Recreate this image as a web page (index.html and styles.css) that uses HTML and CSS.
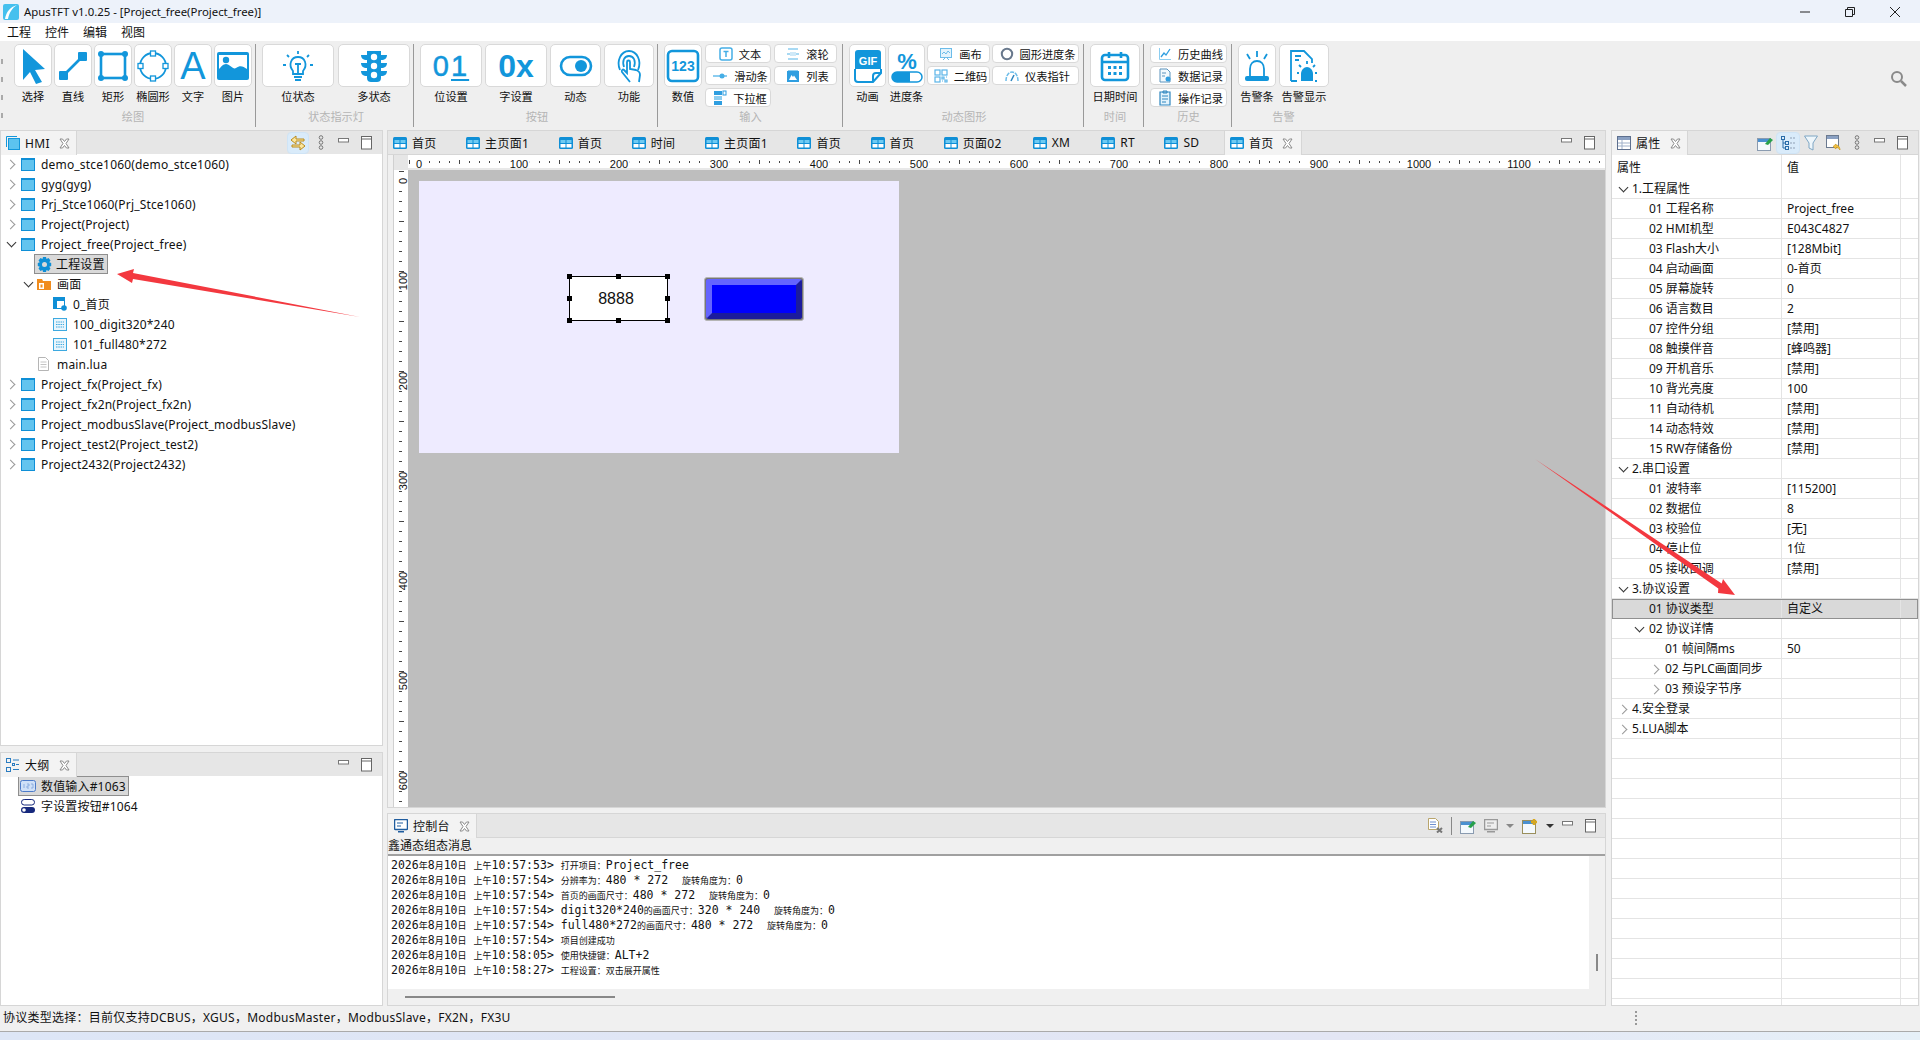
FILE: index.html
```html
<!DOCTYPE html>
<html lang="zh-CN">
<head>
  <meta charset="UTF-8">
  <title>ApusTFT v1.0.25 - [Project_free(Project_free)]</title>
  <link rel="stylesheet" href="styles.css">
</head>
<body>

  <svg class="sprite" width="0" height="0">
    <symbol id="page" viewBox="0 0 14 12"><rect width="14" height="12" rx="1.5" fill="#0f8fd6"/><rect x="1.5" y="3" width="5" height="3" fill="#6fcaf2"/><rect x="7.5" y="3" width="5" height="3" fill="#6fcaf2"/><rect x="1.5" y="7" width="5" height="3.5" fill="#fff"/><rect x="7.5" y="7" width="5" height="3.5" fill="#fff"/></symbol>
    <symbol id="folder" viewBox="0 0 14 13"><rect width="14" height="13" fill="#0f8fd6"/><rect x="1" y="2" width="12" height="10" fill="#62c4ef"/></symbol>
    <symbol id="screen" viewBox="0 0 14 13"><rect x=".5" y=".5" width="13" height="12" fill="#e8f5fc" stroke="#3da9e0"/><path d="M3 4h8M3 6.500h8M3 9h8" stroke="#3da9e0" stroke-dasharray="1.500 .8"/></symbol>
    <symbol id="close" viewBox="0 0 11 11"><path d="M1 1h2.500l2 2.500 2-2.500H10L7 5.500l3 4.500H7.500l-2-2.500-2 2.500H1l3-4.500z" fill="#fff" stroke="#8b8b8b"/></symbol>
    <symbol id="min" viewBox="0 0 11 5"><rect x=".5" y=".5" width="10" height="3.500" fill="#fff" stroke="#777"/></symbol>
    <symbol id="max" viewBox="0 0 11 14"><rect x=".5" y=".5" width="10" height="12.500" fill="#fff" stroke="#666"/><path d="M1 3h9" stroke="#666"/></symbol>
    <symbol id="dots" viewBox="0 0 6 15"><g fill="none" stroke="#777"><circle cx="3" cy="2.500" r="1.800"/><circle cx="3" cy="7.500" r="1.800"/><circle cx="3" cy="12.500" r="1.800"/></g></symbol>
    <symbol id="pin" viewBox="0 0 16 16"><rect x=".5" y="3.500" width="13" height="12" fill="#f4f9fd" stroke="#8a9bb0"/><rect x="1" y="4" width="12" height="3" fill="#4a90d0"/><path d="M8 9l5-6 3 2-5 5z" fill="#27a04a"/></symbol>
  </svg>

  <div class="titlebar">
    <svg class="logo" width="16" height="16" viewBox="0 0 16 16"><rect width="16" height="16" rx="2" fill="#45c0ee"/><path d="M2 15C3 8 7 3 14 1 9 4 6 9 5 15z" fill="#fff"/></svg>
    <span class="title">ApusTFT v1.0.25 - [Project_free(Project_free)]</span>
    <div class="winbtns">
      <svg width="12" height="12" viewBox="0 0 12 12"><path d="M1 6h10" stroke="#222"/></svg>
      <svg width="12" height="12" viewBox="0 0 12 12"><path d="M1.500 3.500h7v7h-7zM3.500 3V1.500h7v7H9" fill="none" stroke="#222"/></svg>
      <svg width="12" height="12" viewBox="0 0 12 12"><path d="M1 1l10 10M11 1L1 11" stroke="#222"/></svg>
    </div>
  </div>

  <div class="menubar">
    <span>工程</span><span>控件</span><span>编辑</span><span>视图</span>
  </div>

  <div class="toolbar">
    <div class="grip"><i></i><i></i><i></i><i></i></div>

    <section class="group first">
      <div class="group-body gap2">
        <div class="tool w38"><div class="btn"><svg class="ico" width="32" height="36" viewBox="0 0 32 36"><path d="M6 1l22 20-10 1 7 12-6 2-6-12-7 8z"/></svg></div><label>选择</label></div>
        <div class="tool w38"><div class="btn"><svg class="ico" width="32" height="32" viewBox="0 0 32 32"><rect x="2" y="21" width="9" height="9" rx="1"/><rect x="21" y="2" width="9" height="9" rx="1"/><path d="M7 25L26 6" class="ln"/></svg></div><label>直线</label></div>
        <div class="tool w38"><div class="btn"><svg class="ico" width="32" height="32" viewBox="0 0 32 32"><rect x="4" y="4" width="24" height="24" class="ln"/><circle cx="4" cy="4" r="3"/><circle cx="28" cy="4" r="3"/><circle cx="4" cy="28" r="3"/><circle cx="28" cy="28" r="3"/></svg></div><label>矩形</label></div>
        <div class="tool w38"><div class="btn"><svg class="ico" width="32" height="32" viewBox="0 0 32 32"><circle cx="16" cy="16" r="13" class="ln thin"/><g fill="#fff" stroke="#1296db" stroke-width="1.300"><rect x="13.500" y="1" width="5" height="5"/><rect x="13.500" y="26" width="5" height="5"/><rect x="1" y="13.500" width="5" height="5"/><rect x="26" y="13.500" width="5" height="5"/></g></svg></div><label>椭圆形</label></div>
        <div class="tool w38"><div class="btn"><span class="glyph-a">A</span></div><label>文字</label></div>
        <div class="tool w38"><div class="btn"><svg class="ico" width="34" height="32" viewBox="0 0 34 32"><rect x="1" y="2" width="32" height="28" rx="2"/><path d="M3 5h28v14c-4-3-7-4-11-1-3 2-6-4-10-4-3 0-5 3-7 5z" fill="#fff"/><circle cx="10" cy="10" r="3.200"/></svg></div><label>图片</label></div>
      </div>
      <div class="caption">绘图</div>
    </section>

    <section class="group">
      <div class="group-body gap4">
        <div class="tool w72"><div class="btn"><svg class="ico" width="32" height="32" viewBox="0 0 32 32"><g class="ln thin"><path d="M11 21c-5-6-2-14 5-14s10 8 5 14v3H11z"/><path d="M13 14h6M16 14v10M12 27h8M13 30h6M16 1v3M5 5l2 2M27 5l-2 2M1 15h3M31 15h-3"/></g></svg></div><label>位状态</label></div>
        <div class="tool w72"><div class="btn"><svg class="ico" width="32" height="34" viewBox="0 0 32 34"><path d="M9 2h14v4h6c0 3-2 5-6 5v3h6c0 3-2 5-6 5v3h6c0 3-2 5-6 5v2c0 3-2 4-4 4h-6c-2 0-4-1-4-4v-2c-4 0-6-2-6-5h6v-3c-4 0-6-2-6-5h6v-3c-4 0-6-2-6-5h6z"/><g fill="#fff"><circle cx="16" cy="8" r="3.200"/><circle cx="16" cy="17" r="3.200"/><circle cx="16" cy="26" r="3.200"/></g></svg></div><label>多状态</label></div>
      </div>
      <div class="caption">状态指示灯</div>
    </section>

    <section class="group">
      <div class="group-body gap3">
        <div class="tool w62"><div class="btn"><span class="glyph-01">0<u>1</u></span></div><label>位设置</label></div>
        <div class="tool w62"><div class="btn"><span class="glyph-0x">0x</span></div><label>字设置</label></div>
        <div class="tool w51"><div class="btn"><svg class="ico" width="34" height="24" viewBox="0 0 34 24"><rect x="2" y="3" width="30" height="18" rx="9" class="ln"/><circle cx="22" cy="12" r="6"/></svg></div><label>动态</label></div>
        <div class="tool w50"><div class="btn"><svg class="ico" width="32" height="34" viewBox="0 0 32 34"><g class="ln thin"><path d="M7 21C3 12 8 2 16 2s13 10 9 19"/><path d="M11 18c-2-6 0-11 5-11s7 5 5 11"/><path d="M17 33l-8-10c-1-2 1-3 2-2l3 3V13c0-2 3-2 3 0v7l6 1c3 1 4 3 4 5l-1 7"/></g></svg></div><label>功能</label></div>
      </div>
      <div class="caption">按钮</div>
    </section>

    <section class="group pad5">
      <div class="group-body gap3">
        <div class="tool w38"><div class="btn"><svg class="ico" width="34" height="34" viewBox="0 0 34 34"><rect x="2" y="2" width="30" height="30" rx="4" class="ln"/><text x="17" y="22" class="icotext" font-size="14" font-weight="700">123</text></svg></div><label>数值</label></div>
        <div class="smallgrid cols-input">
          <div class="sbtn"><svg width="14" height="14" viewBox="0 0 14 14"><rect x="1" y="1" width="12" height="12" rx="2" fill="none" stroke="#45aee6" stroke-width="1.500"/><path d="M4.500 4.500h5M7 4.500v5.500" stroke="#45aee6" stroke-width="1.500"/></svg>文本</div>
          <div class="sbtn"><svg width="14" height="14" viewBox="0 0 14 14"><path d="M2 2h10M1 7h12M2 12h10" stroke="#8ccdf0" stroke-width="1.500"/><path d="M4 5h6v4H4z" fill="#cfe9f8"/></svg>滚轮</div>
          <div class="sbtn"><svg width="16" height="14" viewBox="0 0 16 14"><path d="M1 7h14" stroke="#8ccdf0" stroke-width="2"/><circle cx="10" cy="7" r="2.500" fill="#45aee6"/></svg>滑动条</div>
          <div class="sbtn"><svg width="14" height="14" viewBox="0 0 14 14"><rect x="1" y="2" width="12" height="11" fill="#2f9ee0"/><path d="M2 1h10v1H2z" fill="#8ccdf0"/><path d="M3 11l2.500-5L7 8l1-1.500L11 11z" fill="#fff"/></svg>列表</div>
          <div class="sbtn"><svg width="14" height="16" viewBox="0 0 14 16"><rect x="1" y="1" width="8" height="4" fill="#2f9ee0"/><rect x="10" y="1" width="3" height="4" fill="none" stroke="#2f9ee0"/><rect x="1" y="6" width="8" height="4" fill="#8ccdf0"/><rect x="1" y="11" width="8" height="4" fill="#2f9ee0"/></svg>下拉框</div>
        </div>
      </div>
      <div class="caption">输入</div>
    </section>

    <section class="group pad4">
      <div class="group-body gap2">
        <div class="tool w37"><div class="btn"><svg width="32" height="36" viewBox="0 0 32 36"><path d="M3 5c0-2 1-3 3-3h20c2 0 3 1 3 3v16H3z" fill="#1296db"/><path d="M3 21v10c0 2 1 3 3 3h15l8-9v-4" fill="none" stroke="#1296db" stroke-width="2"/><path d="M21 34v-6c0-2 1-3 3-3h5" fill="none" stroke="#1296db" stroke-width="2"/><text x="16" y="17" class="icotext white" font-size="11" font-weight="700">GIF</text></svg></div><label>动画</label></div>
        <div class="tool w37"><div class="btn"><svg class="ico" width="34" height="34" viewBox="0 0 34 34"><text x="17" y="20" class="icotext" font-size="22" font-weight="700">%</text><rect x="2" y="23" width="30" height="10" rx="5" fill="#fff" stroke="#1296db" stroke-width="1.500"/><path d="M7 23h13v10H7a5 5 0 0 1 0-10z"/></svg></div><label>进度条</label></div>
        <div class="smallgrid cols-dyn">
          <div class="sbtn"><svg width="14" height="14" viewBox="0 0 14 14"><rect x="1.500" y="1.500" width="11" height="9" fill="#e3f3fc" stroke="#6cbce9"/><path d="M3 7l2-2 2 2 2-3 2 2M4 13l2-2M10 13l-2-2" fill="none" stroke="#6cbce9"/></svg>画布</div>
          <div class="sbtn"><svg width="14" height="14" viewBox="0 0 14 14"><circle cx="7" cy="7" r="5.200" fill="none" stroke="#68788c" stroke-width="2"/></svg>圆形进度条</div>
          <div class="sbtn"><svg width="14" height="14" viewBox="0 0 14 14"><g fill="none" stroke="#5ab4e8" stroke-width="1.200"><rect x="1" y="1" width="5" height="5"/><rect x="8" y="1" width="5" height="5"/><rect x="1" y="8" width="5" height="5"/><path d="M8 8h2v2H8zM11 11h2v2h-2zM8 12h1M12 8h1"/></g></svg>二维码</div>
          <div class="sbtn"><svg width="14" height="14" viewBox="0 0 14 14"><path d="M1 12c0-6 3-9 6-9s6 3 6 9" fill="none" stroke="#6cbce9" stroke-width="1.500" stroke-dasharray="4 1"/><path d="M6 12l3-6" stroke="#2f86bf" stroke-width="1.500"/></svg>仪表指针</div>
        </div>
      </div>
      <div class="caption">动态图形</div>
    </section>

    <section class="group">
      <div class="group-body">
        <div class="tool w50"><div class="btn"><svg class="ico" width="32" height="32" viewBox="0 0 32 32"><rect x="3" y="5" width="26" height="25" rx="3" class="ln"/><path d="M3 12h26M10 2v6M22 2v6" class="ln"/><g><rect x="9" y="16" width="3" height="3"/><rect x="14.500" y="16" width="3" height="3"/><rect x="20" y="16" width="3" height="3"/><rect x="9" y="22" width="3" height="3"/><rect x="14.500" y="22" width="3" height="3"/><rect x="20" y="22" width="3" height="3"/></g></svg></div><label>日期时间</label></div>
      </div>
      <div class="caption">时间</div>
    </section>

    <section class="group pad4">
      <div class="smallgrid cols-hist">
        <div class="sbtn"><svg width="14" height="14" viewBox="0 0 14 14"><path d="M1.500 1v11.500H13" fill="none" stroke="#8ccdf0"/><path d="M3 10l3-4 2 2 4-6" fill="none" stroke="#2f9ee0" stroke-width="1.300"/></svg>历史曲线</div>
        <div class="sbtn"><svg width="14" height="15" viewBox="0 0 14 15"><path d="M2 1h7l3 3v10H2z" fill="#f2f9fd" stroke="#5a93bd"/><path d="M4 5h4M4 8h3" stroke="#5a93bd"/><circle cx="10" cy="11" r="2.500" fill="#2f9ee0"/></svg>数据记录</div>
        <div class="sbtn"><svg width="14" height="16" viewBox="0 0 14 16"><path d="M2 2h10v13H2z" fill="#e3f3fc" stroke="#2f86bf" stroke-width="1.200"/><path d="M5 1h4v2H5zM4 6h6M4 9h6M4 12h4" fill="none" stroke="#2f86bf"/></svg>操作记录</div>
      </div>
      <div class="caption">历史</div>
    </section>

    <section class="group last">
      <div class="group-body gap3">
        <div class="tool w38"><div class="btn"><svg class="ico" width="32" height="34" viewBox="0 0 32 34"><g class="ln thin"><path d="M9 27V20c0-5 3-8 7-8s7 3 7 8v7"/><path d="M16 2v6M6 5l3 5M26 5l-3 5"/></g><rect x="4" y="27" width="24" height="5" rx="2"/></svg></div><label>告警条</label></div>
        <div class="tool w50"><div class="btn"><svg class="ico" width="34" height="34" viewBox="0 0 34 34"><path d="M4 32V2h13l8 8v4M4 32h6M28 32h2" class="ln thin" fill="none"/><path d="M8 7h6M8 11h4" class="ln thin"/><path d="M14 32v-7c0-4 3-7 6-7s6 3 6 7v7z"/><path d="M20 12v3M12 16l2 2M28 16l-2 2M10 24h2M28 24h2" class="ln thin"/></svg></div><label>告警显示</label></div>
        <svg class="search" width="18" height="18" viewBox="0 0 18 18"><circle cx="7" cy="7" r="5" fill="none" stroke="#8a8a8a" stroke-width="2"/><path d="M11 11l5 5" stroke="#8a8a8a" stroke-width="2.500"/></svg>
      </div>
      <div class="caption">告警</div>
    </section>
  </div>

  <div class="workbench">

    <div class="col">
      <div class="panel tree-panel">
        <div class="tabbar">
          <div class="tab active">
            <svg width="14" height="14" viewBox="0 0 14 14"><path d="M.5 11V.5H11" fill="none" stroke="#1296db"/><rect x="2.500" y="2.500" width="11" height="11" fill="#5cc3ef" stroke="#1296db"/></svg>
            HMI<svg class="x" width="11" height="11"><use href="#close"/></svg>
          </div>
          <div class="tabtools">
            <svg class="on" width="20" height="20" viewBox="0 0 20 20"><path d="M8 3L3 7l5 4V8h8V6H8zM12 9l5 4-5 4v-3H4v-2h8z" fill="#fbe7a0" stroke="#b98a1c"/></svg>
            <svg width="6" height="15"><use href="#dots"/></svg>
            <svg class="mi" width="11" height="5"><use href="#min"/></svg>
            <svg width="11" height="14"><use href="#max"/></svg>
          </div>
        </div>
        <div class="tree">
          <div class="node d0"><b class="tw"></b><svg width="14" height="13"><use href="#folder"/></svg>demo_stce1060(demo_stce1060)</div>
          <div class="node d0"><b class="tw"></b><svg width="14" height="13"><use href="#folder"/></svg>gyg(gyg)</div>
          <div class="node d0"><b class="tw"></b><svg width="14" height="13"><use href="#folder"/></svg>Prj_Stce1060(Prj_Stce1060)</div>
          <div class="node d0"><b class="tw"></b><svg width="14" height="13"><use href="#folder"/></svg>Project(Project)</div>
          <div class="node d0"><b class="tw open"></b><svg width="14" height="13"><use href="#folder"/></svg>Project_free(Project_free)</div>
          <div class="node d1"><span class="picked"><svg width="15" height="15" viewBox="0 0 15 15"><path d="M6 0h3l.5 2 2-1 2 2.500-1.300 1.700 2 .8v3l-2 .8 1.300 1.700-2 2.500-2-1L9 15H6l-.5-2-2 1-2-2.500 1.300-1.700-2-.8V6l2-.8L1.500 3.500l2-2.500 2 1z" fill="#0f8fd6"/><circle cx="7.500" cy="7.500" r="2.500" fill="#d9d9d9"/></svg>工程设置</span></div>
          <div class="node d1 branch"><b class="tw open"></b><svg width="14" height="12" viewBox="0 0 14 12"><path d="M0 1h5l1 2h8v9H0z" fill="#f08c1e"/><rect x="2" y="5" width="5" height="6" fill="#fff"/><rect x="3.500" y="6.500" width="2" height="3" fill="#f08c1e"/></svg>画面</div>
          <div class="node d2"><svg width="14" height="14" viewBox="0 0 14 14"><rect x=".5" y=".5" width="11" height="11" fill="#fff" stroke="#0f8fd6"/><path d="M1 1h10v3H1zM1 4h3v7H1z" fill="#0f8fd6"/><circle cx="11" cy="11" r="2.800" fill="#0f8fd6"/></svg>0_首页</div>
          <div class="node d2"><svg width="14" height="13"><use href="#screen"/></svg>100_digit320*240</div>
          <div class="node d2"><svg width="14" height="13"><use href="#screen"/></svg>101_full480*272</div>
          <div class="node d1 file"><svg width="11" height="14" viewBox="0 0 11 14"><path d="M.5.500h7l3 3v10H.5z" fill="#fff" stroke="#b5b5b5"/><path d="M2.500 5h6M2.500 7.500h6M2.500 10h6" stroke="#c4c4c4"/></svg>main.lua</div>
          <div class="node d0"><b class="tw"></b><svg width="14" height="13"><use href="#folder"/></svg>Project_fx(Project_fx)</div>
          <div class="node d0"><b class="tw"></b><svg width="14" height="13"><use href="#folder"/></svg>Project_fx2n(Project_fx2n)</div>
          <div class="node d0"><b class="tw"></b><svg width="14" height="13"><use href="#folder"/></svg>Project_modbusSlave(Project_modbusSlave)</div>
          <div class="node d0"><b class="tw"></b><svg width="14" height="13"><use href="#folder"/></svg>Project_test2(Project_test2)</div>
          <div class="node d0"><b class="tw"></b><svg width="14" height="13"><use href="#folder"/></svg>Project2432(Project2432)</div>
        </div>
      </div>

      <div class="panel outline-panel">
        <div class="tabbar">
          <div class="tab active">
            <svg width="14" height="14" viewBox="0 0 14 14"><g fill="none" stroke="#2a7cc0"><rect x=".5" y=".5" width="4" height="4"/><rect x=".5" y="9.500" width="4" height="4"/><rect x="6.500" y="5.500" width="2" height="2"/><path d="M7 2h6M10 6.500h3M7 11.500h6"/></g></svg>
            大纲<svg class="x" width="11" height="11"><use href="#close"/></svg>
          </div>
          <div class="tabtools">
            <svg class="mi" width="11" height="5"><use href="#min"/></svg>
            <svg width="11" height="14"><use href="#max"/></svg>
          </div>
        </div>
        <div class="tree outline">
          <div class="node"><span class="picked"><svg width="16" height="12" viewBox="0 0 16 12"><rect x=".5" y=".5" width="15" height="11" rx="2" fill="#cfe0f7" stroke="#4d7cc9"/><path d="M4 4v4M7 4h2v2H7v2h2M11 4h2v4h-2" fill="none" stroke="#7fa3dc" stroke-width=".8"/></svg>数值输入#1063</span></div>
          <div class="node"><svg width="14" height="14" viewBox="0 0 14 14"><rect x=".5" y=".5" width="13" height="5.500" rx="2.700" fill="#fff" stroke="#16287c"/><rect x="0" y="8" width="14" height="6" rx="3" fill="#16287c"/><circle cx="3" cy="11" r="1.800" fill="#fff"/></svg>字设置按钮#1064</div>
        </div>
      </div>
    </div>

    <div class="col center">
      <div class="panel editor">
        <div class="tabbar">
          <div class="tab"><svg width="14" height="12"><use href="#page"/></svg>首页</div>
          <div class="tab"><svg width="14" height="12"><use href="#page"/></svg>主页面1</div>
          <div class="tab"><svg width="14" height="12"><use href="#page"/></svg>首页</div>
          <div class="tab"><svg width="14" height="12"><use href="#page"/></svg>时间</div>
          <div class="tab"><svg width="14" height="12"><use href="#page"/></svg>主页面1</div>
          <div class="tab"><svg width="14" height="12"><use href="#page"/></svg>首页</div>
          <div class="tab"><svg width="14" height="12"><use href="#page"/></svg>首页</div>
          <div class="tab wide"><svg width="14" height="12"><use href="#page"/></svg>页面02</div>
          <div class="tab wide"><svg width="14" height="12"><use href="#page"/></svg>XM</div>
          <div class="tab"><svg width="14" height="12"><use href="#page"/></svg>RT</div>
          <div class="tab"><svg width="14" height="12"><use href="#page"/></svg>SD</div>
          <div class="tab active doc"><svg width="14" height="12"><use href="#page"/></svg>首页<svg class="x" width="11" height="11"><use href="#close"/></svg></div>
          <div class="tabtools">
            <svg class="mi" width="11" height="5"><use href="#min"/></svg>
            <svg width="11" height="14"><use href="#max"/></svg>
          </div>
        </div>
        <div class="editor-body">
          <div class="ruler-row">
            <div class="corner"></div>
            <div class="ruler-x">
              <span><i>0</i></span><span><i>100</i></span><span><i>200</i></span><span><i>300</i></span><span><i>400</i></span><span><i>500</i></span><span><i>600</i></span><span><i>700</i></span><span><i>800</i></span><span><i>900</i></span><span><i>1000</i></span><span><i>1100</i></span>
            </div>
          </div>
          <div class="stage-row">
            <div class="ruler-y">
              <span><i>0</i></span><span><i>100</i></span><span><i>200</i></span><span><i>300</i></span><span><i>400</i></span><span><i>500</i></span><span><i>600</i></span>
            </div>
            <div class="stage">
              <div class="screen">
                <div class="w-input">8888
                  <b class="hd tl"></b><b class="hd tc"></b><b class="hd tr"></b><b class="hd ml"></b><b class="hd mr"></b><b class="hd bl"></b><b class="hd bc"></b><b class="hd br"></b>
                </div>
                <div class="w-button"><div></div></div>
              </div>
            </div>
          </div>
        </div>
      </div>

      <div class="panel console">
        <div class="tabbar">
          <div class="tab active con">
            <svg width="14" height="14" viewBox="0 0 14 14"><rect x=".5" y=".5" width="13" height="10" rx="1" fill="#fff" stroke="#1f5c9e" stroke-width="1.500"/><path d="M3 4h6M3 7h4" stroke="#1f5c9e"/><path d="M4 12h6v1.500H4z" fill="#1f5c9e"/></svg>
            控制台<svg class="x" width="11" height="11"><use href="#close"/></svg>
          </div>
          <div class="tabtools con-tools">
            <svg width="15" height="15" viewBox="0 0 15 15"><path d="M.5.500h7l3 3v8H.5z" fill="#fff" stroke="#b9a56c"/><path d="M2 4h6M2 6.500h6M2 9h6" stroke="#6f8fce"/><path d="M9 10l5 4.500M14 10l-5 4.500" stroke="#777" stroke-width="2"/></svg>
            <i class="vsep"></i>
            <svg width="16" height="16"><use href="#pin"/></svg>
            <svg width="14" height="14" viewBox="0 0 14 14"><rect x=".5" y=".5" width="13" height="10" fill="#eee" stroke="#999" stroke-width="1.500"/><path d="M3 4h7M3 7h4" stroke="#999"/><path d="M3 12h8v1.500H3z" fill="#999"/></svg>
            <i class="tri gray"></i>
            <svg width="16" height="16" viewBox="0 0 16 16"><rect x=".5" y="2.500" width="13" height="13" fill="#f4f9fd" stroke="#9a8f5c"/><rect x="1" y="3" width="12" height="3" fill="#4a90d0"/><path d="M12 1v6M9 4h6" stroke="#d8a81f" stroke-width="2.500"/></svg>
            <i class="tri"></i>
            <svg class="mi" width="11" height="5"><use href="#min"/></svg>
            <svg width="11" height="14"><use href="#max"/></svg>
          </div>
        </div>
        <div class="con-head">鑫通态组态消息</div>
        <div class="con-main">
          <div class="con-text">
            <div>2026<i>年</i>8<i>月</i>10<i>日</i> <i>上午</i>10:57:53&gt; <i>打开项目：</i>Project_free</div>
            <div>2026<i>年</i>8<i>月</i>10<i>日</i> <i>上午</i>10:57:54&gt; <i>分辨率为：</i>480 * 272  <i>旋转角度为：</i>0</div>
            <div>2026<i>年</i>8<i>月</i>10<i>日</i> <i>上午</i>10:57:54&gt; <i>首页的画面尺寸：</i>480 * 272  <i>旋转角度为：</i>0</div>
            <div>2026<i>年</i>8<i>月</i>10<i>日</i> <i>上午</i>10:57:54&gt; digit320*240<i>的画面尺寸：</i>320 * 240  <i>旋转角度为：</i>0</div>
            <div>2026<i>年</i>8<i>月</i>10<i>日</i> <i>上午</i>10:57:54&gt; full480*272<i>的画面尺寸：</i>480 * 272  <i>旋转角度为：</i>0</div>
            <div>2026<i>年</i>8<i>月</i>10<i>日</i> <i>上午</i>10:57:54&gt; <i>项目创建成功</i></div>
            <div>2026<i>年</i>8<i>月</i>10<i>日</i> <i>上午</i>10:58:05&gt; <i>使用快捷键：</i>ALT+2</div>
            <div>2026<i>年</i>8<i>月</i>10<i>日</i> <i>上午</i>10:58:27&gt; <i>工程设置：双击展开属性</i></div>
          </div>
          <div class="vscroll"><b></b></div>
        </div>
        <div class="hscroll"><b></b></div>
      </div>
    </div>

    <div class="panel props">
      <div class="tabbar">
        <div class="tab active">
          <svg width="14" height="14" viewBox="0 0 14 14"><rect x=".5" y=".5" width="13" height="13" fill="#fff" stroke="#5d6f8e"/><path d="M1 1h12v3H1z" fill="#8aa0c2"/><path d="M1 7h12M1 10h12M5 4v9" stroke="#9fb0c9"/></svg>
          属性<svg class="x" width="11" height="11"><use href="#close"/></svg>
        </div>
        <div class="tabtools prop-tools">
          <svg width="16" height="16"><use href="#pin"/></svg>
          <svg class="on" width="22" height="20" viewBox="0 0 22 20"><g fill="none" stroke="#2a6ca8"><rect x="4.500" y="3.500" width="3" height="3"/><rect x="8.500" y="8.500" width="3" height="3"/><rect x="8.500" y="13.500" width="3" height="3"/><path d="M6 7v8h2M6 10h2"/></g><path d="M13 5h6M13 10h6M13 15h6" stroke="#8fa0b5" stroke-dasharray="2 1"/></svg>
          <svg width="14" height="16" viewBox="0 0 14 16"><path d="M.5 1h13L9 8v7l-4-2V8z" fill="#eef6fb" stroke="#7fa6c4"/></svg>
          <svg width="16" height="16" viewBox="0 0 16 16"><rect x=".5" y=".5" width="12" height="12" fill="#fff" stroke="#6b7a90"/><path d="M1 1h11v3H1z" fill="#8aa0c2"/><path d="M10 9l-3 2.500 3 2.500v-1.500c2 0 3 1 4 2.500 0-3-1.500-5-4-5z" fill="#f1c043" stroke="#c49216" stroke-width=".6"/></svg>
          <svg width="6" height="15"><use href="#dots"/></svg>
          <svg class="mi" width="11" height="5"><use href="#min"/></svg>
          <svg width="11" height="14"><use href="#max"/></svg>
        </div>
      </div>
      <div class="ptable">
        <div class="prow phead"><div>属性</div><div>值</div><div></div></div>
        <div class="prow"><div class="l0"><b class="tw open"></b>1.工程属性</div><div></div><div></div></div>
        <div class="prow"><div class="l1">01 工程名称</div><div>Project_free</div><div></div></div>
        <div class="prow"><div class="l1">02 HMI机型</div><div>E043C4827</div><div></div></div>
        <div class="prow"><div class="l1">03 Flash大小</div><div>[128Mbit]</div><div></div></div>
        <div class="prow"><div class="l1">04 启动画面</div><div>0-首页</div><div></div></div>
        <div class="prow"><div class="l1">05 屏幕旋转</div><div>0</div><div></div></div>
        <div class="prow"><div class="l1">06 语言数目</div><div>2</div><div></div></div>
        <div class="prow"><div class="l1">07 控件分组</div><div>[禁用]</div><div></div></div>
        <div class="prow"><div class="l1">08 触摸伴音</div><div>[蜂鸣器]</div><div></div></div>
        <div class="prow"><div class="l1">09 开机音乐</div><div>[禁用]</div><div></div></div>
        <div class="prow"><div class="l1">10 背光亮度</div><div>100</div><div></div></div>
        <div class="prow"><div class="l1">11 自动待机</div><div>[禁用]</div><div></div></div>
        <div class="prow"><div class="l1">14 动态特效</div><div>[禁用]</div><div></div></div>
        <div class="prow"><div class="l1">15 RW存储备份</div><div>[禁用]</div><div></div></div>
        <div class="prow"><div class="l0"><b class="tw open"></b>2.串口设置</div><div></div><div></div></div>
        <div class="prow"><div class="l1">01 波特率</div><div>[115200]</div><div></div></div>
        <div class="prow"><div class="l1">02 数据位</div><div>8</div><div></div></div>
        <div class="prow"><div class="l1">03 校验位</div><div>[无]</div><div></div></div>
        <div class="prow"><div class="l1">04 停止位</div><div>1位</div><div></div></div>
        <div class="prow"><div class="l1">05 接收回调</div><div>[禁用]</div><div></div></div>
        <div class="prow"><div class="l0"><b class="tw open"></b>3.协议设置</div><div></div><div></div></div>
        <div class="prow selected"><div class="l1">01 协议类型</div><div>自定义</div><div></div></div>
        <div class="prow"><div class="l1b"><b class="tw open"></b>02 协议详情</div><div></div><div></div></div>
        <div class="prow"><div class="l2">01 帧间隔ms</div><div>50</div><div></div></div>
        <div class="prow"><div class="l2b"><b class="tw"></b>02 与PLC画面同步</div><div></div><div></div></div>
        <div class="prow"><div class="l2b"><b class="tw"></b>03 预设字节序</div><div></div><div></div></div>
        <div class="prow"><div class="l0"><b class="tw"></b>4.安全登录</div><div></div><div></div></div>
        <div class="prow"><div class="l0"><b class="tw"></b>5.LUA脚本</div><div></div><div></div></div>
        <div class="prow filler"><div></div><div></div><div></div></div>
      </div>
    </div>
  </div>

  <div class="statusbar">
    <span>协议类型选择：目前仅支持DCBUS，XGUS，ModbusMaster，ModbusSlave，FX2N，FX3U</span>
    <i class="status-grip"></i>
  </div>
  <div class="desktop"></div>

  <svg class="arrows" width="1920" height="1040" viewBox="0 0 1920 1040">
    <polygon points="360,317 133,273 134,269 117,274 132,283 133,279"/>
    <polygon points="1535,459 1721.700,583.500 1723,579 1735,595 1718,593 1718.300,588.500"/>
  </svg>

</body>
</html>
```

FILE: styles.css
```css
* {
  box-sizing: border-box;
}
html, body {
  margin: 0;
  height: 1040px;
  overflow: hidden;
}
body {
  display: flex;
  flex-direction: column;
  position: relative;
  font-family: "Noto Sans", "Noto Sans CJK SC", sans-serif;
  font-size: 12px;
  color: #111;
  background: #f0f0f0;
}
.sprite {
  position: absolute;
}
svg {
  flex: none;
  display: block;
}

/* window chrome */
.titlebar {
  height: 23px;
  flex: none;
  display: flex;
  align-items: center;
  background: #edf2fa;
  padding-left: 3px;
}
.title {
  margin-left: 5px;
  font-size: 11.4px;
}
.winbtns {
  margin-left: auto;
  display: flex;
  gap: 33px;
  padding-right: 19px;
}
.menubar {
  height: 18px;
  flex: none;
  display: flex;
  align-items: center;
  gap: 14px;
  padding-left: 7px;
  background: #fff;
}

/* toolbar */
.toolbar {
  height: 89px;
  flex: none;
  display: flex;
  padding-top: 3px;
  background: #efefef;
  font-size: 11.2px;
  position: relative;
}
.grip {
  position: absolute;
  left: 1px;
  top: 18px;
  display: flex;
  flex-direction: column;
  gap: 13px;
}
.grip i {
  width: 2px;
  height: 5px;
  background: #aaa;
}
.group {
  padding: 0 3px 0 6px;
  border-right: 1px solid #999;
  height: 83px;
  display: flex;
  flex-direction: column;
}
.group.first {
  padding-left: 14px;
}
.group.pad4 {
  padding-right: 4px;
}
.group.pad5 {
  padding-right: 5px;
}
.group.last {
  flex: 1;
  border-right: 0;
}
.group-body {
  display: flex;
  height: 64px;
}
.gap2 { gap: 2px; }
.gap3 { gap: 3px; }
.gap4 { gap: 4px; }
.caption {
  text-align: center;
  color: #b5b5b5;
  line-height: 16px;
  margin-top: 1px;
}
.group.last .caption {
  width: 91px;
}
.tool {
  display: flex;
  flex-direction: column;
  align-items: center;
}
.tool label {
  margin-top: 1px;
  line-height: 18px;
  white-space: nowrap;
}
.w37 { width: 37px; }
.w38 { width: 38px; }
.w50 { width: 50px; }
.w51 { width: 51px; }
.w62 { width: 62px; }
.w72 { width: 72px; }
.btn {
  width: 100%;
  height: 43px;
  flex: none;
  display: flex;
  align-items: center;
  justify-content: center;
  background: #fff;
  border: 1px solid #d9d9d9;
  border-radius: 5px;
  color: #1296db;
}
.ico {
  fill: #1296db;
}
.ln {
  fill: none;
  stroke: #1296db;
  stroke-width: 2.6;
}
.ln.thin {
  stroke-width: 1.8;
}
.icotext {
  fill: #1296db;
  text-anchor: middle;
  font-family: "Liberation Sans", sans-serif;
}
.icotext.white {
  fill: #fff;
}
.glyph-a, .glyph-01, .glyph-0x {
  font-family: "Liberation Sans", sans-serif;
  line-height: 36px;
  height: 36px;
}
.glyph-a {
  font-size: 38px;
}
.glyph-01 {
  font-size: 29px;
  letter-spacing: 2px;
  -webkit-text-stroke: .5px #1296db;
}
.glyph-01 u {
  text-underline-offset: 3px;
  text-decoration-thickness: 2px;
}
.glyph-0x {
  font-size: 32px;
  font-weight: 700;
}
.smallgrid {
  display: grid;
  grid-auto-rows: 19px;
  gap: 3px;
  align-content: start;
}
.cols-input { grid-template-columns: 66px 63px; }
.cols-dyn {
  grid-template-columns: 63px 87px;
  column-gap: 2px;
}
.cols-hist {
  grid-template-columns: 77px;
  height: 64px;
}
.sbtn {
  display: flex;
  align-items: center;
  justify-content: center;
  gap: 6px;
  padding-left: 4px;
  background: #fff;
  border: 1px solid #d9d9d9;
  border-radius: 4px;
  white-space: nowrap;
}
.search {
  margin: 26px 0 0 558px;
}

/* panels */
.workbench {
  height: 876px;
  flex: none;
  display: grid;
  grid-template-columns: 383px 1219px 309px;
  grid-template-rows: 876px;
  column-gap: 4px;
  padding-right: 1px;
}
.col {
  display: flex;
  flex-direction: column;
  gap: 6px;
  min-height: 0;
}
.col.center {
  gap: 5px;
}
.panel {
  border: 1px solid #d6d6d6;
  background: #fff;
  display: flex;
  flex-direction: column;
  min-height: 0;
}
.tree-panel { height: 616px; flex: none; }
.outline-panel { flex: 1; }
.editor { height: 678px; flex: none; }
.console { flex: 1; background: #f0f0f0; }
.props { margin-left: 1px; }

.tabbar {
  height: 24px;
  flex: none;
  display: flex;
  background: #e6e6e6;
  border-bottom: 1px solid #d6d6d6;
}
.tab {
  display: flex;
  align-items: center;
  gap: 5px;
  padding: 0 24.5px 0 5px;
  letter-spacing: .3px;
  white-space: nowrap;
}
.tab.wide {
  padding-right: 26px;
}
.tab.active {
  background: #f3f3f3;
  padding: 0 6px 0 5px;
  margin-bottom: -1px;
  position: relative;
  border-right: 1px solid #d6d6d6;
  gap: 5px;
}
.tab.doc {
  padding: 0 8px 0 5px;
  border-left: 1px solid #d6d6d6;
}
.tab.con {
  padding-left: 6px;
}
.tab .x {
  margin-left: 4px;
}
.tabtools {
  margin-left: auto;
  display: grid;
  grid-auto-flow: column;
  grid-auto-columns: 23px;
  justify-items: center;
  align-items: center;
  padding-right: 4px;
}
.tabtools .on {
  background: #d9ebfa;
  border-radius: 3px;
  outline: 1px solid #cfe4f6;
}
.tabtools .mi {
  margin: -4px 0 0 0;
}
.con-tools {
  display: flex;
  gap: 8px;
  padding-right: 9px;
}
.con-tools svg:last-child {
  margin-left: 4px;
}
.vsep {
  width: 1px;
  height: 18px;
  background: #888;
}
.tri {
  width: 0;
  height: 0;
  border: 4px solid transparent;
  border-top: 4px solid #333;
  border-bottom: 0;
}
.tri.gray {
  border-top-color: #888;
}

/* tree */
.tree {
  flex: 1;
  background: #fff;
  padding-bottom: 1px;
  margin-top: -1px;
  letter-spacing: .17px;
}
.node {
  height: 20px;
  display: flex;
  align-items: center;
  gap: 6px;
  white-space: nowrap;
}
.node.d0 { padding-left: 5px; }
.node.d0 .tw { margin-right: 1px; }
.node.d1 { padding-left: 33px; }
.node.d1.branch { padding-left: 22px; }
.node.d1.file { padding-left: 37px; gap: 8px; }
.node.d2 { padding-left: 52px; }
.outline .node { padding-left: 17px; }
.outline .node > svg { margin-left: 3px; }
.picked {
  display: flex;
  align-items: center;
  gap: 4px;
  height: 20px;
  padding: 0 2px 0 2px;
  background: #d9d9d9;
  border: 1px solid #8e8e8e;
}
.outline .picked {
  gap: 5px;
  padding-left: 1px;
}
.tw {
  width: 8px;
  height: 8px;
  flex: none;
  display: block;
  position: relative;
}
.tw::before {
  content: "";
  position: absolute;
  left: 1px;
  top: 1px;
  width: 6px;
  height: 6px;
  border-top: 1.5px solid #999;
  border-right: 1.5px solid #999;
  transform: rotate(45deg);
}
.tw.open::before {
  left: 2px;
  top: -1px;
  border-color: #333;
  transform: rotate(135deg);
}

/* editor */
.editor-body {
  flex: 1;
  display: flex;
  flex-direction: column;
  padding-left: 5px;
  background: #f0f0f0;
  min-height: 0;
}
.ruler-row {
  display: flex;
  height: 15px;
  flex: none;
}
.corner {
  width: 15px;
  background: #e6e6e6;
  border-left: 1px solid #d0d0d0;
}
.ruler-x {
  flex: 1;
  display: flex;
  overflow: hidden;
  padding-left: 11px;
  background-color: #fff;
  background-image:
    repeating-linear-gradient(90deg, #444 0 1px, transparent 1px 10px),
    repeating-linear-gradient(90deg, #444 0 1px, transparent 1px 50px);
  background-size: 100% 2px, 100% 4px;
  background-position: 1px 6px, 1px 5px;
  background-repeat: no-repeat;
  border-bottom: 2px solid #e8e8e8;
}
.ruler-x span {
  flex: none;
  width: 100px;
  height: 13px;
}
.ruler-x i, .ruler-y i {
  font-family: "Liberation Sans", sans-serif;
  font-style: normal;
  font-size: 11px;
  line-height: 13px;
  color: #111;
  background: #fff;
}
.ruler-x i {
  display: inline-block;
  padding: 0 2px;
  transform: translateX(-50%);
}
.stage-row {
  flex: 1;
  display: flex;
  min-height: 0;
}
.ruler-y {
  width: 15px;
  flex: none;
  overflow: hidden;
  padding-top: 11px;
  background-color: #fff;
  background-image:
    repeating-linear-gradient(#444 0 1px, transparent 1px 10px),
    repeating-linear-gradient(#444 0 1px, transparent 1px 50px);
  background-size: 3px 100%, 5px 100%;
  background-position: 5px 1px, 5px 1px;
  background-repeat: no-repeat;
  border-left: 1px solid #d0d0d0;
}
.ruler-y span {
  display: flex;
  justify-content: flex-end;
  height: 100px;
}
.ruler-y i {
  writing-mode: vertical-rl;
  align-self: flex-start;
  line-height: 10px;
  transform: translateY(-50%) rotate(180deg);
}
.stage {
  flex: 1;
  background: #bebebe;
  padding: 11px;
}
.screen {
  width: 480px;
  height: 272px;
  background: #eeebff;
  position: relative;
}
.w-input {
  position: absolute;
  left: 150px;
  top: 95px;
  width: 99px;
  height: 45px;
  padding-right: 5px;
  background: #fff;
  border: 1px solid #000;
  display: flex;
  align-items: center;
  justify-content: center;
  font-family: "Liberation Sans", sans-serif;
  font-size: 16px;
}
.hd {
  position: absolute;
  width: 5px;
  height: 5px;
  background: #000;
}
.hd.tl { left: -3px; top: -3px; }
.hd.tc { left: 46px; top: -3px; }
.hd.tr { right: -3px; top: -3px; }
.hd.ml { left: -3px; top: 19px; }
.hd.mr { right: -3px; top: 19px; }
.hd.bl { left: -3px; bottom: -3px; }
.hd.bc { left: 46px; bottom: -3px; }
.hd.br { right: -3px; bottom: -3px; }
.w-button {
  position: absolute;
  left: 285px;
  top: 96px;
  width: 100px;
  height: 44px;
  padding: 1px;
  background: #777;
  border: 1px solid #b5b5b5;
  border-radius: 3px;
}
.w-button div {
  height: 100%;
  background: #0000ff;
  border: 6px solid;
  border-color: #6464ff #1c1c9c #1c1c9c #6464ff;
  border-radius: 3px;
}

/* console */
.con-head {
  height: 18px;
  flex: none;
  line-height: 16px;
  border-bottom: 2px solid #a0a0a0;
  background: #f0f0f0;
  white-space: nowrap;
}
.con-main {
  height: 133px;
  flex: none;
  display: flex;
}
.con-text {
  flex: 1;
  background: #fff;
  padding: 2px 0 0 3px;
  font-family: "DejaVu Sans Mono", monospace;
  font-size: 11.5px;
  line-height: 15px;
}
.con-text div {
  height: 15px;
  white-space: pre;
}
.con-text i {
  font-family: "Noto Sans CJK SC", sans-serif;
  font-style: normal;
  font-size: 9px;
}
.vscroll {
  width: 16px;
  padding: 98px 0 0 7px;
}
.vscroll b {
  display: block;
  width: 2px;
  height: 17px;
  background: #888;
}
.hscroll {
  flex: 1;
  padding: 7px 0 0 17px;
}
.hscroll b {
  display: block;
  width: 210px;
  height: 2px;
  background: #888;
}

/* properties */
.ptable {
  flex: 1;
  display: flex;
  flex-direction: column;
  min-height: 0;
}
.prow {
  height: 20px;
  flex: none;
  display: grid;
  grid-template-columns: 170px 119px 1fr;
  border-bottom: 1px solid #e4e4e4;
  line-height: 19px;
}
.prow > div {
  border-right: 1px solid #e4e4e4;
  padding-left: 5px;
  white-space: nowrap;
  display: flex;
  align-items: center;
}
.prow > div:last-child {
  border-right: 0;
}
.prow.phead {
  height: 24px;
  border-bottom: 0;
}
.prow .l0 { padding-left: 6px; gap: 6px; }
.prow .l1 { padding-left: 37px; }
.prow .l1b { padding-left: 22px; gap: 7px; }
.prow .l2 { padding-left: 53px; }
.prow .l2b { padding-left: 38px; gap: 7px; }
.prow.selected {
  background: #d9d9d9;
  outline: 1px solid #909090;
  outline-offset: -1px;
}
.prow.filler {
  flex: 1;
  border-bottom: 0;
  background: repeating-linear-gradient(transparent 0 19px, #e4e4e4 19px 20px);
}

/* bottom */
.statusbar {
  height: 26px;
  flex: none;
  display: flex;
  align-items: center;
  padding: 0 0 4px 3px;
  background: #f0f0f0;
  border-bottom: 1px solid #aaa;
  letter-spacing: .25px;
  position: relative;
}
.status-grip {
  position: absolute;
  left: 1635px;
  top: 5px;
  width: 2px;
  height: 16px;
  background: repeating-linear-gradient(#999 0 2px, transparent 2px 4px);
}
.desktop {
  flex: 1;
  background: linear-gradient(90deg, #dde6f6, #e3e6f4 70%, #e6f0f8);
}
.arrows {
  position: absolute;
  left: 0;
  top: 0;
  pointer-events: none;
  fill: #f3383f;
}
```
